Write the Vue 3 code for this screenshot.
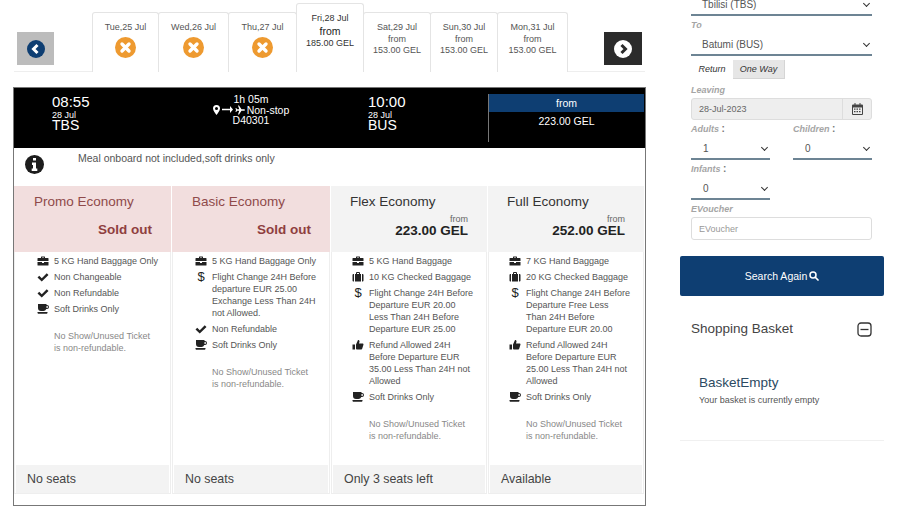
<template>
  <div class="page">
    <!-- left column: date tabs + flight card -->
    <main class="results">
      <div class="date-row">
        <div class="arrow arrow-prev">
          <svg width="18" height="18" viewBox="0 0 18 18"><circle cx="9" cy="9" r="9" fill="#0e3e72" /><polyline points="10.5,5 6.500,9 10.500,13" fill="none" stroke="#fff" stroke-width="3" /></svg>
        </div>
        <div class="tabs">
          <div v-for="tab in tabs" :key="tab.date" class="tab" :class="{ active: tab.active }">
            <div>{{ tab.date }}</div>
            <template v-if="tab.price">
              <div class="tab-from">from</div>
              <div>{{ tab.price }}</div>
            </template>
            <svg v-else class="tab-x" width="21" height="21" viewBox="0 0 21 21">
              <circle cx="10.500" cy="10.500" r="10.500" fill="#ee9a30" />
              <path d="M7 7l7 7M14 7l-7 7" stroke="#fff" stroke-width="3.400" stroke-linecap="round" />
            </svg>
          </div>
        </div>
        <div class="arrow arrow-next">
          <svg width="18" height="18" viewBox="0 0 18 18"><circle cx="9" cy="9" r="9" fill="#fff" /><polyline points="7.500,5 11.500,9 7.500,13" fill="none" stroke="#2b2b2b" stroke-width="3" /></svg>
        </div>
      </div>

      <section class="card">
        <div class="flight">
          <div class="leg">
            <div class="time">08:55</div>
            <div class="day">28 Jul</div>
            <div class="code">TBS</div>
          </div>
          <div class="route">
            <div>1h 05m</div>
            <div class="route-line">
              <svg width="7" height="10" viewBox="0 0 14 20"><path fill="#fff" fill-rule="evenodd" d="M7 0a7 7 0 0 1 7 7c0 4-5 10-7 13C5 17 0 11 0 7a7 7 0 0 1 7-7zm0 4a3 3 0 1 0 0 6 3 3 0 0 0 0-6z" /></svg>
              <svg width="11" height="7" viewBox="0 0 22 14"><path fill="#fff" d="M0 5.500h16V0l6 7-6 7V8.500H0z" /></svg>
              <svg width="10" height="10" viewBox="0 0 20 20"><path fill="#fff" d="M20 10c0-1-1-1.500-2.500-1.500H13L8 1H6l2.500 7.500H4L2.500 6H1l1 4-1 4h1.500L4 11.500h4.500L6 19h2l5-7.500h4.500C19 11.500 20 11 20 10z" /></svg>
              <span>Non-stop</span>
            </div>
            <div>D40301</div>
          </div>
          <div class="leg">
            <div class="time">10:00</div>
            <div class="day">28 Jul</div>
            <div class="code">BUS</div>
          </div>
          <div class="price">
            <div class="price-from">from</div>
            <div class="price-value">223.00 GEL</div>
          </div>
        </div>

        <div class="notice">
          <svg class="notice-icon" width="19" height="19" viewBox="0 0 19 19">
            <circle cx="9.500" cy="9.500" r="9.500" fill="#1d1d1d" />
            <path fill="#fff" d="M8 3h3v2.600H8zM7 7.500h4v6h1.300V16H6.700v-2.500H8V10H7z" />
          </svg>
          <span>Meal onboard not included,soft drinks only</span>
        </div>

        <div class="fares">
          <article v-for="fare in fares" :key="fare.name" class="fare">
            <header class="fare-head" :class="{ soldout: !fare.price }">
              <div class="fare-name">{{ fare.name }}</div>
              <div v-if="fare.price" class="fare-price">
                <div class="fare-from">from</div>
                <div class="fare-amount">{{ fare.price }}</div>
              </div>
              <div v-else class="fare-sold">Sold out</div>
            </header>
            <div class="fare-body">
              <div v-for="row in fare.rows" :key="row.text" class="perk">
                <span class="perk-icon">
                  <span v-if="row.icon === 'dollar'" class="dollar">$</span>
                  <svg v-else width="12" height="12" viewBox="0 0 24 24"><path fill="#222" fill-rule="evenodd" :d="icons[row.icon]" /></svg>
                </span>
                <span class="perk-text">{{ row.text }}</span>
              </div>
              <p class="fare-note">No Show/Unused Ticket<br />is non-refundable.</p>
            </div>
            <footer class="fare-foot">{{ fare.seats }}</footer>
          </article>
        </div>
      </section>
    </main>

    <!-- right column: search form + basket -->
    <aside class="side">
      <div class="form">
        <div class="select"><span>Tbilisi (TBS)</span><i class="chev"></i></div>
        <label class="lbl">To</label>
        <div class="select"><span>Batumi (BUS)</span><i class="chev"></i></div>
        <div class="trip">
          <span class="trip-btn">Return</span>
          <span class="trip-btn on">One Way</span>
        </div>
        <label class="lbl lbl-leaving">Leaving</label>
        <div class="date">
          <span class="date-val">28-Jul-2023</span>
          <span class="date-add">
            <svg width="11" height="12" viewBox="0 0 22 24"><path fill="#444" fill-rule="evenodd" d="M5 0h2v3h8V0h2v3h3a2 2 0 0 1 2 2v17a2 2 0 0 1-2 2H2a2 2 0 0 1-2-2V5a2 2 0 0 1 2-2h3zM2 9v13h18V9zm2 2h3v2.500H4zm5 0h3v2.500H9zm5 0h3v2.500h-3zm-10 5h3v2.500H4zm5 0h3v2.500H9zm5 0h3v2.500h-3z" /></svg>
          </span>
        </div>
        <div class="pax">
          <div>
            <label class="lbl">Adults <b>:</b></label>
            <div class="select"><span>1</span><i class="chev"></i></div>
          </div>
          <div>
            <label class="lbl">Children <b>:</b></label>
            <div class="select"><span>0</span><i class="chev"></i></div>
          </div>
          <div>
            <label class="lbl">Infants <b>:</b></label>
            <div class="select select-small"><span>0</span><i class="chev"></i></div>
          </div>
        </div>
        <label class="lbl">EVoucher</label>
        <input class="voucher" placeholder="EVoucher" />
      </div>

      <button class="search">
        Search Again
        <svg width="10" height="10" viewBox="0 0 20 20"><circle cx="8" cy="8" r="6" fill="none" stroke="#fff" stroke-width="3" /><path d="M12.500 12.500L18 18" stroke="#fff" stroke-width="3.500" stroke-linecap="round" /></svg>
      </button>

      <div class="basket">
        <div class="basket-head">
          <span>Shopping Basket</span>
          <svg width="15" height="15" viewBox="0 0 15 15"><rect x="1" y="1" width="13" height="13" rx="3" fill="none" stroke="#333" stroke-width="1.300" /><path d="M3.500 7.500h8" stroke="#333" stroke-width="1.300" /></svg>
        </div>
        <div class="basket-title">BasketEmpty</div>
        <div class="basket-text">Your basket is currently empty</div>
      </div>
    </aside>
  </div>
</template>

<script setup>
const icons = {
  briefcase: 'M9 3h6a1 1 0 0 1 1 1v2h6a1 1 0 0 1 1 1v5H1V7a1 1 0 0 1 1-1h6V4a1 1 0 0 1 1-1zm1 2v1h4V5zM1 14h9v2h4v-2h9v6a1 1 0 0 1-1 1H2a1 1 0 0 1-1-1z',
  check: 'M1 13l3.500-3.500L9.500 14.500 19.500 4.500 23 8 9.500 21z',
  suitcase: 'M1 8a2 2 0 0 1 2-2h1v15H3a2 2 0 0 1-2-2zM6 6h2V4a2 2 0 0 1 2-2h4a2 2 0 0 1 2 2v2h2v15H6zm4 0h4V4h-4zM20 6h1a2 2 0 0 1 2 2v11a2 2 0 0 1-2 2h-1z',
  thumb: 'M1 11h5v10H1zM8 11l4-9c2 0 3 1 3 3l-1 4h7c1.500 0 2 1 2 2l-2.500 8c-.3 1-1 2-2 2H10c-1 0-2-1-2-2z',
  coffee: 'M2 2h17v2h1a4 4 0 0 1 0 8h-1.500a6 6 0 0 1-5.500 4H8a6 6 0 0 1-6-6zm17 4v4h1a2 2 0 0 0 0-4zM1 18h20v1.500c0 1-1 2-2 2H3c-1 0-2-1-2-2z'
};

const tabs = [
  { date: 'Tue,25 Jul' },
  { date: 'Wed,26 Jul' },
  { date: 'Thu,27 Jul' },
  { date: 'Fri,28 Jul', price: '185.00 GEL', active: true },
  { date: 'Sat,29 Jul', price: '153.00 GEL' },
  { date: 'Sun,30 Jul', price: '153.00 GEL' },
  { date: 'Mon,31 Jul', price: '153.00 GEL' }
];

const drinks = { icon: 'coffee', text: 'Soft Drinks Only' };

const fares = [
  {
    name: 'Promo Economy',
    seats: 'No seats',
    rows: [
      { icon: 'briefcase', text: '5 KG Hand Baggage Only' },
      { icon: 'check', text: 'Non Changeable' },
      { icon: 'check', text: 'Non Refundable' },
      drinks
    ]
  },
  {
    name: 'Basic Economy',
    seats: 'No seats',
    rows: [
      { icon: 'briefcase', text: '5 KG Hand Baggage Only' },
      { icon: 'dollar', text: 'Flight Change 24H Before departure EUR 25.00 Exchange Less Than 24H not Allowed.' },
      { icon: 'check', text: 'Non Refundable' },
      drinks
    ]
  },
  {
    name: 'Flex Economy',
    price: '223.00 GEL',
    seats: 'Only 3 seats left',
    rows: [
      { icon: 'briefcase', text: '5 KG Hand Baggage' },
      { icon: 'suitcase', text: '10 KG Checked Baggage' },
      { icon: 'dollar', text: 'Flight Change 24H Before Departure EUR 20.00 Less Than 24H Before Departure EUR 25.00' },
      { icon: 'thumb', text: 'Refund Allowed 24H Before Departure EUR 35.00 Less Than 24H not Allowed' },
      drinks
    ]
  },
  {
    name: 'Full Economy',
    price: '252.00 GEL',
    seats: 'Available',
    rows: [
      { icon: 'briefcase', text: '7 KG Hand Baggage' },
      { icon: 'suitcase', text: '20 KG Checked Baggage' },
      { icon: 'dollar', text: 'Flight Change 24H Before\nDeparture Free Less\nThan 24H Before\nDeparture EUR 20.00' },
      { icon: 'thumb', text: 'Refund Allowed 24H Before Departure EUR 25.00 Less Than 24H not Allowed' },
      drinks
    ]
  }
];
</script>

<style>
html, body { background: #fff; overflow: hidden; }
</style>

<style scoped>
.page {
  width: 900px;
  height: 508px;
  overflow: hidden;
  display: flex;
  font-family: "Liberation Sans", Arial, sans-serif;
  color: #555;
  background: #fff;
}

/* ===== left column ===== */
.results {
  width: 633px;
  margin-left: 13px;
  padding-top: 3px;
  flex-shrink: 0;
}

.date-row {
  display: flex;
  height: 69px;
  margin-left: 1px;
  width: 631px;
  border-bottom: 1px solid #eee;
  box-sizing: border-box;
}

.arrow {
  width: 37px;
  height: 33px;
  margin-top: 29px;
  display: flex;
  align-items: center;
  justify-content: center;
  flex-shrink: 0;
}
.arrow-prev { background: #bcbcbc; margin-left: 3px; margin-right: 38px; }
.arrow-next { background: #2b2b2b; margin-left: 37px; width: 38px; }

.tabs {
  display: grid;
  grid-template-columns: 66px 70px 68px 67px 67px 67px 70px;
  align-items: end;
}

.tab {
  height: 60px;
  box-sizing: border-box;
  padding-top: 9px;
  border: 1px solid #e4e4e4;
  border-bottom: 0;
  border-radius: 3px 3px 0 0;
  margin-right: -1px;
  text-align: center;
  font-size: 9px;
  line-height: 11px;
  color: #555;
  background: #fff;
}
.tab.active {
  height: 69px;
  padding-top: 9px;
  color: #333;
}
.tab-from { margin-top: 1px; }
.tab.active .tab-from { font-size: 10.500px; line-height: 13px; margin-top: 1px; color: #222; }
.tab-x { display: block; margin: 4px auto 0; }

.card {
  margin-top: 15px;
  height: 419px;
  box-sizing: border-box;
  border: 1px solid #777;
  display: flex;
  flex-direction: column;
}

.flight {
  height: 60px;
  background: #000;
  color: #fff;
  display: grid;
  grid-template-columns: 157px 158px 156px 156px;
  gap: 0 1px;
  flex-shrink: 0;
}

.leg { padding: 7px 0 0 38px; }
.leg + .route + .leg { padding-left: 37px; }
.time { font-size: 15px; line-height: 14px; }
.day { font-size: 9px; line-height: 9px; margin-top: 2px; }
.code { font-size: 14px; line-height: 10px; }

.route {
  padding-top: 6px;
  text-align: center;
  font-size: 10.500px;
  line-height: 10.500px;
}
.route-line {
  display: flex;
  align-items: center;
  justify-content: center;
  gap: 2px;
}

.price {
  margin-top: 6px;
  height: 48px;
  border-left: 1px solid #777;
  text-align: center;
  font-size: 10.500px;
}
.price-from { height: 18px; line-height: 18px; background: #0e3e72; }
.price-value { line-height: 12px; margin-top: 3px; }

.notice {
  height: 38px;
  flex-shrink: 0;
  display: flex;
  align-items: flex-start;
  font-size: 10.500px;
  color: #555;
}
.notice-icon { margin: 7px 0 0 11px; }
.notice span { margin: 4px 0 0 34px; line-height: 12px; }

.fares {
  display: grid;
  grid-template-columns: 157px 158px 156px 156px;
  gap: 0 1px;
  height: 308px;
}

.fare {
  display: flex;
  flex-direction: column;
  border: 1px solid #eee;
  border-top: 0;
  box-sizing: border-box;
  min-width: 0;
}

.fare-head {
  height: 66px;
  background: #f3f3f3;
  padding: 8px 19px 0 19px;
  box-sizing: border-box;
  color: #333;
  margin: 0 -1px;
  flex-shrink: 0;
}
.fare-head.soldout { background: #f2dede; color: #8f4a4a; padding-left: 20px; }
.fare-name { font-size: 13.500px; line-height: 16px; }
.fare-price { text-align: right; margin-top: 4px; }
.fare-from { font-size: 9px; line-height: 10px; color: #666; }
.fare-amount { font-size: 13.500px; font-weight: 700; line-height: 14px; color: #222; }
.fare-sold {
  text-align: right;
  font-size: 13.500px;
  font-weight: 700;
  line-height: 16px;
  margin-top: 12px;
  color: #8f3f3f;
}

.fare-body {
  flex: 1;
  padding: 3px 0 0 22px;
  font-size: 9px;
  line-height: 12px;
}
.fare:nth-child(n + 3) .fare-body { padding-left: 20px; }

.perk {
  display: flex;
  margin-bottom: 4px;
}
.perk-icon {
  width: 17px;
  flex-shrink: 0;
  height: 12px;
  display: flex;
  align-items: center;
}
.dollar {
  width: 12px;
  text-align: center;
  font-size: 13px;
  color: #222;
}
.perk-text { width: 107px; white-space: pre-line; }

.fare-note {
  margin: 15px 0 0 17px;
  color: #888;
}

.fare-foot {
  height: 28px;
  margin: 0 1px;
  background: #f3f3f3;
  padding-left: 11px;
  font-size: 12.400px;
  line-height: 28px;
  color: #444;
  flex-shrink: 0;
}

/* ===== right column ===== */
.side {
  width: 204px;
  margin-left: 34px;
  flex-shrink: 0;
}

.form {
  margin: -6px 12px 0 11px;
}

.select {
  height: 22px;
  box-sizing: border-box;
  border-bottom: 2px solid #6d8494;
  display: flex;
  align-items: center;
  justify-content: space-between;
  padding: 0 3px 0 11px;
  font-size: 10px;
  color: #555;
}

.chev {
  width: 4px;
  height: 4px;
  border-right: 1.500px solid #333;
  border-bottom: 1.500px solid #333;
  transform: rotate(45deg);
  margin-top: -2px;
}

.lbl {
  display: block;
  height: 18px;
  line-height: 18px;
  font-size: 9px;
  font-style: italic;
  font-weight: 700;
  color: #a5a5a5;
}
.lbl b { color: #777; font-style: normal; font-size: 10px; }
.lbl-leaving { margin-top: 3px; height: 16px; line-height: 16px; }

.trip {
  display: flex;
  margin-top: 4px;
  height: 19px;
  padding-left: 0;
}
.trip-btn {
  font-size: 9px;
  font-style: italic;
  color: #333;
  line-height: 19px;
  width: 42px;
  text-align: center;
}
.trip-btn.on {
  width: 52px;
  background: #e6e6e6;
  border-bottom: 1px solid #d5d5d5;
  border-right: 1px solid #d5d5d5;
  box-sizing: border-box;
}

.date {
  height: 22px;
  box-sizing: border-box;
  display: flex;
  background: #eee;
  border: 1px solid #ddd;
  border-radius: 3px;
  font-size: 9px;
  line-height: 20px;
  color: #666;
}
.date-val { flex: 1; padding-left: 7px; }
.date-add {
  width: 28px;
  border-left: 1px solid #ddd;
  display: flex;
  align-items: center;
  justify-content: center;
}

.pax {
  display: grid;
  grid-template-columns: 79px 79px;
  justify-content: space-between;
}
.pax .select { padding-left: 12px; }

.voucher {
  display: block;
  width: 100%;
  height: 23px;
  margin-top: -1px;
  box-sizing: border-box;
  border: 1px solid #ddd;
  border-radius: 3px;
  padding: 0 7px;
  font: 9px "Liberation Sans", Arial, sans-serif;
  outline: none;
}
.voucher::placeholder { color: #999; }

.search {
  display: flex;
  width: 100%;
  height: 40px;
  margin-top: 16px;
  border: 0;
  border-radius: 2px;
  background: #0e3e72;
  color: #fff;
  align-items: center;
  justify-content: center;
  gap: 2px;
  font: 10.500px "Liberation Sans", Arial, sans-serif;
}

.basket {
  height: 145px;
  box-sizing: border-box;
  padding: 25px 12px 0 11px;
  border-bottom: 1px solid #f0f0f0;
}
.basket-head {
  display: flex;
  justify-content: space-between;
  align-items: center;
  font-size: 13.500px;
  line-height: 16px;
  color: #444;
}
.basket-title {
  margin: 38px 0 0 8px;
  font-size: 13.500px;
  line-height: 16px;
  color: #2c4a62;
}
.basket-text {
  margin: 4px 0 0 8px;
  font-size: 9px;
  line-height: 11px;
  color: #555;
}
</style>
